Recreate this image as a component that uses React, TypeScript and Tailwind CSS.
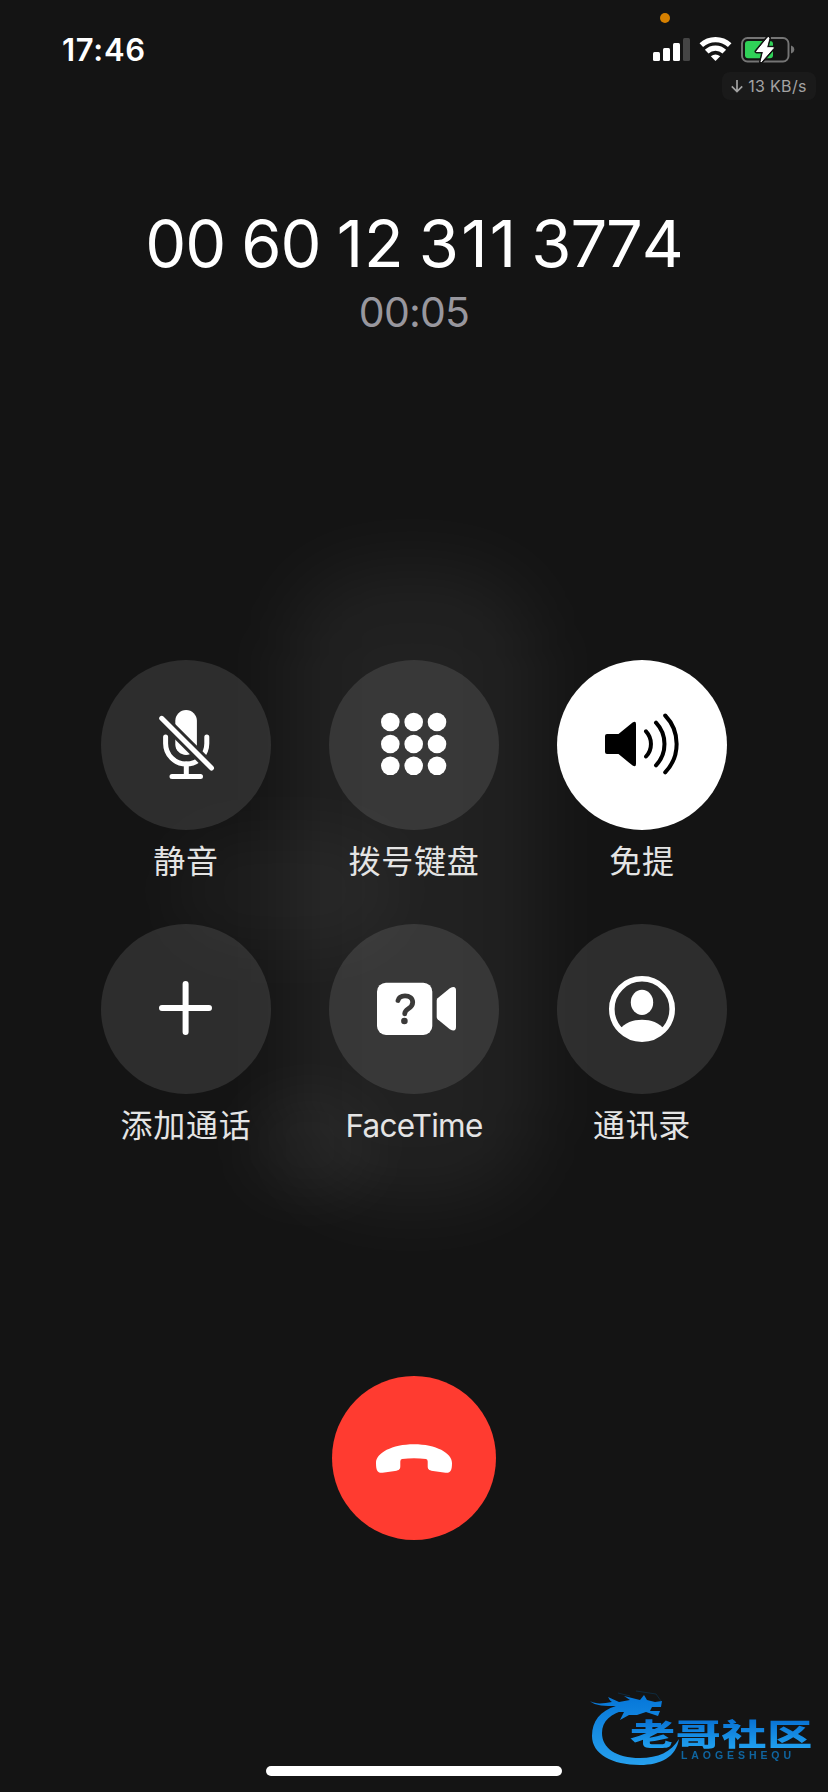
import type { ReactNode } from "react";

const MuteIcon = () => (
  <svg viewBox="0 0 170 170" className="size-full" fill="none" stroke="white" strokeWidth="5" strokeLinecap="round">
    <mask id="slash-gap" maskUnits="userSpaceOnUse" x="0" y="0" width="170" height="170">
      <rect width="170" height="170" fill="white" stroke="none" />
      <path d="M50 47.6 121 118.6" stroke="black" strokeWidth="11" />
    </mask>
    <g mask="url(#slash-gap)">
      <rect x="74.3" y="50" width="21.6" height="45" rx="10.8" fill="white" stroke="none" />
      <path d="M64.6 77v6.5a20.6 20.6 0 0 0 41.2 0V77" />
    </g>
    <path d="M85.3 104v12M71 116.5h28.5" />
    <path d="M60.7 58.3 110.5 108" />
  </svg>
);

const KeypadIcon = () => (
  <svg viewBox="0 0 170 170" className="size-full" fill="white">
    {[62, 84, 105.8].map((y) =>
      [61.3, 84.7, 108].map((x) => <circle key={`${x}-${y}`} cx={x} cy={y} r="9.3" />),
    )}
  </svg>
);

const SpeakerIcon = () => (
  <svg viewBox="0 0 170 170" className="size-full" fill="none" stroke="black" strokeWidth="4" strokeLinecap="round">
    <path
      d="M50 74h11.5L75.6 62.4Q79 60.4 79 64v40q0 3.600-3.400 1.600L61.500 94H50q-2 0-2-2V76q0-2 2-2Z"
      fill="black"
      stroke="none"
    />
    <path d="M89 71.300a18.500 18.500 0 0 1 0 25.200M99 62.700a31 31 0 0 1 0 42.600M108.200 55.500a41 41 0 0 1 0 56.800" />
  </svg>
);

const PlusIcon = () => (
  <svg viewBox="0 0 170 170" className="size-full" stroke="white" strokeWidth="6" strokeLinecap="round">
    <path d="M61 84h47M84.600 60v48" />
  </svg>
);

const VideoIcon = () => (
  <svg viewBox="0 0 170 170" className="size-full" fill="white">
    <rect x="48" y="58.700" width="55.300" height="52.300" rx="9" />
    <path d="M108.600 74.200 120.800 64.200Q127 60.800 127 66.500V103Q127 108.500 120.800 105.200L108.600 95.200Q107.700 94.400 107.700 93V76.400Q107.700 75 108.600 74.200Z" />
    <path
      d="M69 76.500C69.800 73 72.500 71.800 76 71.800C80.500 71.800 83.700 74.300 83.700 78.300C83.700 81.500 81.800 83.200 79.300 84.800C76.800 86.400 75.800 87.400 75.700 89.800"
      fill="none"
      stroke="#3b3a39"
      strokeWidth="4.800"
      strokeLinecap="round"
    />
    <circle cx="75.400" cy="97" r="3.300" fill="#3b3a39" />
  </svg>
);

const ContactsIcon = () => (
  <svg viewBox="0 0 170 170" className="size-full" fill="white">
    <clipPath id="contact-disc">
      <circle cx="85" cy="85" r="32" />
    </clipPath>
    <circle cx="85" cy="85" r="30.200" fill="none" stroke="white" strokeWidth="5.600" />
    <ellipse cx="85" cy="78.400" rx="11.200" ry="12.600" />
    <path d="M62 106C68 98.500 76 95.700 85 95.700S102 98.500 108 106V120H62Z" clipPath="url(#contact-disc)" />
  </svg>
);

const HangUpIcon = () => (
  <svg viewBox="0 0 164 164" className="size-full" fill="white">
    <path d="M82 68.300C104 68.300 120 77 120 87C120 94.500 118.500 97.300 113.500 96.800L101 95C96.500 94.300 95.700 93 95.700 90V85.500Q95.700 83.400 94 83.100Q82 81.500 70 83.100Q68.300 83.400 68.300 85.500V90C68.300 93 67.500 94.300 63 95L50.500 96.800C45.500 97.300 44 94.500 44 87C44 77 60 68.300 82 68.300Z" />
  </svg>
);

type Action = { label: string; icon: ReactNode; active?: boolean; latin?: boolean };

const actions: Action[] = [
  { label: "静音", icon: <MuteIcon /> },
  { label: "拨号键盘", icon: <KeypadIcon /> },
  { label: "免提", icon: <SpeakerIcon />, active: true },
  { label: "添加通话", icon: <PlusIcon /> },
  { label: "FaceTime", icon: <VideoIcon />, latin: true },
  { label: "通讯录", icon: <ContactsIcon /> },
];

function ActionButton({ label, icon, active, latin }: Action) {
  return (
    <div className="flex h-[264px] w-[170px] flex-col items-center">
      <button className={`size-[170px] shrink-0 rounded-full ${active ? "bg-white" : "bg-white/[0.105]"}`}>{icon}</button>
      <span
        className={`mt-2 whitespace-nowrap leading-[48px] text-[#e4e4e4] ${
          latin ? "text-[31.5px] tracking-[-0.8px]" : "text-[32px] tracking-[0.7px]"
        }`}
      >
        {label}
      </span>
    </div>
  );
}

function StatusIcons() {
  return (
    <svg width="146" height="56" viewBox="650 8 146 56" fill="white">
      <circle cx="665" cy="18" r="5" fill="#d68000" />
      <rect x="653" y="52" width="7" height="9" rx="1.500" />
      <rect x="663" y="48" width="7" height="13" rx="1.500" />
      <rect x="673" y="43" width="7" height="18" rx="1.500" />
      <rect x="683" y="38" width="7" height="23" rx="1.500" fill="#454545" />
      <g fill="none" stroke="white" strokeWidth="5.200">
        <path d="M701.300 45.200a20.800 20.800 0 0 1 28.400 0" />
        <path d="M706.700 51.600a12.700 12.700 0 0 1 17.600 0" />
      </g>
      <path d="M715.500 61 710.800 56.300Q715.500 52.600 720.200 56.300Z" />
      <rect x="742" y="38" width="46.500" height="23.500" rx="5.500" fill="none" stroke="#757575" strokeWidth="1.900" />
      <path d="M791 45.500q3.300 1.200 3.300 4t-3.300 4Z" fill="#757575" />
      <rect x="745" y="41" width="28" height="17.300" rx="3" fill="#30d158" />
      <path
        d="M768 37.500 756.500 51.500H763.500L761 62 773.500 47.800H766.500L769 38Z"
        stroke="#141414"
        strokeWidth="4"
        paintOrder="stroke"
        strokeLinejoin="round"
      />
      <path d="M768 37.500 756.500 51.500H763.500L761 62 773.500 47.800H766.500L769 38Z" stroke="white" strokeLinejoin="round" />
    </svg>
  );
}

function CommunityLogo() {
  return (
    <svg width="228" height="84" viewBox="586 1686 228 84" className="opacity-95">
      <defs>
        <linearGradient id="ring-blue" x1="0" y1="1700" x2="0" y2="1766" gradientUnits="userSpaceOnUse">
          <stop stopColor="#087fe5" />
          <stop offset="1" stopColor="#28a9fa" />
        </linearGradient>
        <linearGradient id="word-blue" x1="0" y1="1720" x2="0" y2="1749" gradientUnits="userSpaceOnUse">
          <stop stopColor="#0878df" />
          <stop offset="1" stopColor="#22aafc" />
        </linearGradient>
      </defs>
      <g fill="url(#ring-blue)">
        <path d="M616 1706C600 1711 592 1721 592 1736C592 1754 612 1765 640 1765C661 1765 676 1757 679 1739C671 1752 658 1758 640 1758C616 1758 602 1748 602 1733C602 1721 611 1713 626 1710Z" />
        <path d="M590 1701C597 1705 604 1703 612 1702C609 1700 609 1698 608 1697L619 1702L630 1700L624 1696L640 1700L644 1695L647 1700L655 1702L662 1701L661 1707L652 1707L650 1711L660 1711L658 1716L646 1712L637 1715L629 1715L620 1720L624 1712L613 1712L616 1706C606 1706 595 1706 590 1701Z" />
      </g>
      <path d="M618 1693l12 3M636 1691l20 3 5 7" fill="none" stroke="#0f2c40" strokeWidth="1" />
      <g transform="translate(630 0) scale(1.500 1)">
        <text
          x="0"
          y="1745"
          fontSize="30"
          fontWeight="900"
          textLength="121.500"
          fill="url(#word-blue)"
          className="font-['Noto_Sans_CJK_SC',sans-serif]"
        >
          老哥社区
        </text>
      </g>
      <text
        x="681"
        y="1759"
        fontSize="10.500"
        fontWeight="700"
        textLength="110"
        fill="#0f6aa8"
        className="font-['Liberation_Sans',sans-serif]"
      >
        LAOGESHEQU
      </text>
    </svg>
  );
}

export default function App() {
  return (
    <main className="relative isolate flex h-[1792px] w-[828px] flex-col overflow-hidden bg-[#141414] font-['Inter','Noto_Sans_CJK_SC',sans-serif] text-white">
      <div className="absolute inset-0 -z-10">
        <div className="absolute left-[290px] top-[570px] h-[630px] w-[245px] rounded-[80px] bg-white/[0.06] blur-[42px]" />
        <div className="absolute left-[170px] top-[830px] h-[120px] w-[230px] rounded-full bg-white/[0.035] blur-[35px]" />
        <div className="absolute left-[240px] top-[1090px] h-[110px] w-[140px] rounded-full bg-white/[0.035] blur-[30px]" />
      </div>

      <header className="flex h-[104px] items-start justify-between pl-[62px] pr-3">
        <time className="mt-[30px] text-[31px] font-semibold leading-10 tracking-[0.7px]">17:46</time>
        <div className="flex flex-col items-end pt-2">
          <div className="mr-5">
            <StatusIcons />
          </div>
          <div className="mt-2 flex h-7 w-[94px] items-center justify-center gap-[5px] rounded-lg bg-[#1a1a1a] text-[#a3a3a3]">
            <svg width="12" height="14" viewBox="0 0 12 14" fill="none" stroke="currentColor" strokeWidth="1.700">
              <path d="M6 1v11.500M.800 7.300 6 12.500l5.200-5.200" />
            </svg>
            <span className="whitespace-nowrap text-[16px] leading-[26px] tracking-[0.3px]">13 KB/s</span>
          </div>
        </div>
      </header>

      <section className="flex h-[556px] flex-col items-center pt-[100px]">
        <h1 className="whitespace-nowrap text-[65px] leading-[80px] tracking-[-1.100px] [font-kerning:none] [word-spacing:-1px]">
          00 60 <span className="tracking-[1px]">1</span>2 <span className="tracking-[2.200px]">31</span>1 3774
        </h1>
        <p className="mt-[3px] text-[41px] leading-[50px] tracking-[-0.8px] text-[#98979e]">00:05</p>
      </section>

      <section className="grid grid-cols-[repeat(3,170px)] justify-center gap-x-[58px]">
        {actions.map((action) => (
          <ActionButton key={action.label} {...action} />
        ))}
      </section>

      <div className="mt-[188px] flex justify-center">
        <button className="size-[164px] rounded-full bg-[#ff3b30]">
          <HangUpIcon />
        </button>
      </div>

      <footer className="mt-auto flex h-[106px] flex-col">
        <div className="flex h-20 items-start justify-end pr-[14px]">
          <CommunityLogo />
        </div>
        <div className="mb-4 mt-auto h-[10px] w-[296px] self-center rounded-full bg-white" />
      </footer>
    </main>
  );
}
